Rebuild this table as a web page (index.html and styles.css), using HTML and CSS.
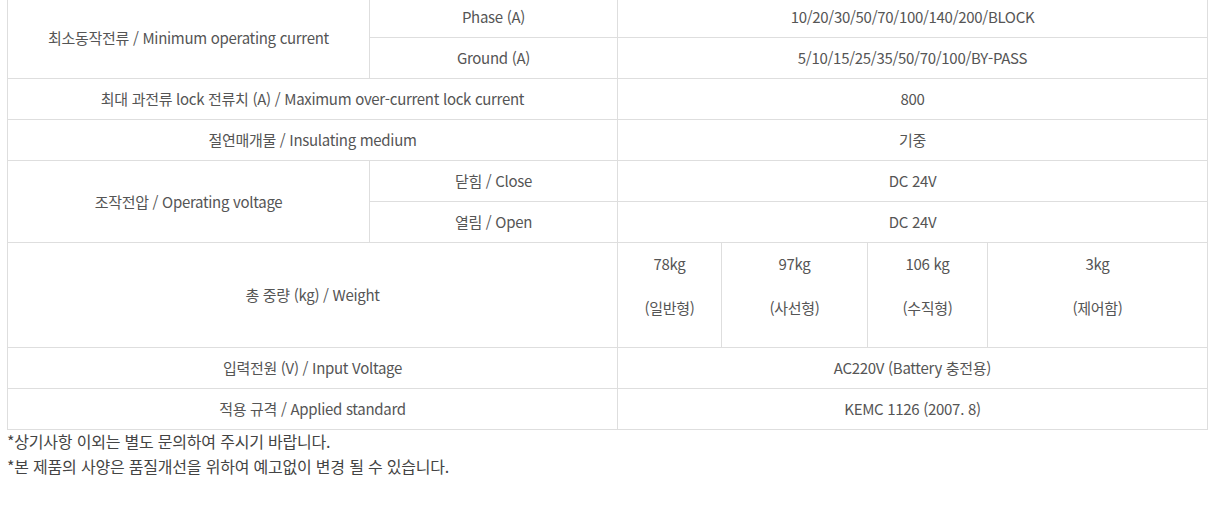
FILE: index.html
```html
<!DOCTYPE html>
<html lang="ko">
<head>
<meta charset="utf-8">
<link rel="stylesheet" href="styles.css">
</head>
<body>
<div class="spec">
  <table class="spec-table">
    <colgroup>
      <col class="c1"><col class="c2"><col class="c3"><col class="c4"><col class="c5"><col class="c6">
    </colgroup>
    <tbody>
      <tr>
        <td rowspan="2">최소동작전류 / Minimum operating current</td>
        <td>Phase (A)</td>
        <td colspan="4">10/20/30/50/70/100/140/200/BLOCK</td>
      </tr>
      <tr>
        <td>Ground (A)</td>
        <td colspan="4">5/10/15/25/35/50/70/100/BY-PASS</td>
      </tr>
      <tr>
        <td colspan="2">최대 과전류 lock 전류치 (A) / Maximum over-current lock current</td>
        <td colspan="4">800</td>
      </tr>
      <tr>
        <td colspan="2">절연매개물 / Insulating medium</td>
        <td colspan="4">기중</td>
      </tr>
      <tr>
        <td rowspan="2">조작전압 / Operating voltage</td>
        <td>닫힘 / Close</td>
        <td colspan="4">DC 24V</td>
      </tr>
      <tr>
        <td>열림 / Open</td>
        <td colspan="4">DC 24V</td>
      </tr>
      <tr class="weight-row">
        <td colspan="2">총 중량 (kg) / Weight</td>
        <td class="w">78kg<br><br>(일반형)</td>
        <td class="w">97kg<br><br>(사선형)</td>
        <td class="w">106 kg<br><br>(수직형)</td>
        <td class="w">3kg<br><br>(제어함)</td>
      </tr>
      <tr>
        <td colspan="2">입력전원 (V) / Input Voltage</td>
        <td colspan="4">AC220V (Battery 충전용)</td>
      </tr>
      <tr>
        <td colspan="2">적용 규격 / Applied standard</td>
        <td colspan="4">KEMC 1126 (2007. 8)</td>
      </tr>
    </tbody>
  </table>
  <p class="note">*상기사항 이외는 별도 문의하여 주시기 바랍니다.</p>
  <p class="note">*본 제품의 사양은 품질개선을 위하여 예고없이 변경 될 수 있습니다.</p>
</div>
</body>
</html>
```

FILE: styles.css
```css
html, body {
  margin: 0;
  padding: 0;
  background: #fff;
}
body {
  font-family: "Noto Sans CJK KR", "Noto Sans", sans-serif;
  font-size: 15px;
  font-weight: 400;
  color: #555;
}
.spec {
  margin: -4px 0 0 7px;
  width: 1200px;
}
.spec-table {
  width: 1200px;
  border-collapse: collapse;
  table-layout: fixed;
}
.c1 { width: 362px; }
.c2 { width: 248px; }
.c3 { width: 104px; }
.c4 { width: 146px; }
.c5 { width: 120px; }
.c6 { width: 220px; }
.spec-table td {
  border: 1px solid #dedede;
  height: 41px;
  padding: 0 8px;
  box-sizing: border-box;
  text-align: center;
  vertical-align: middle;
  line-height: 22px;
  letter-spacing: -0.3px;
}
.spec-table tr.weight-row td {
  height: 105px;
}
.spec-table td.w {
  vertical-align: top;
  padding-top: 10px;
}
.note {
  margin: 0;
  font-size: 16px;
  line-height: 25px;
  color: #444;
  letter-spacing: -0.2px;
}
.note:first-of-type {
  margin-top: -1px;
}
```
